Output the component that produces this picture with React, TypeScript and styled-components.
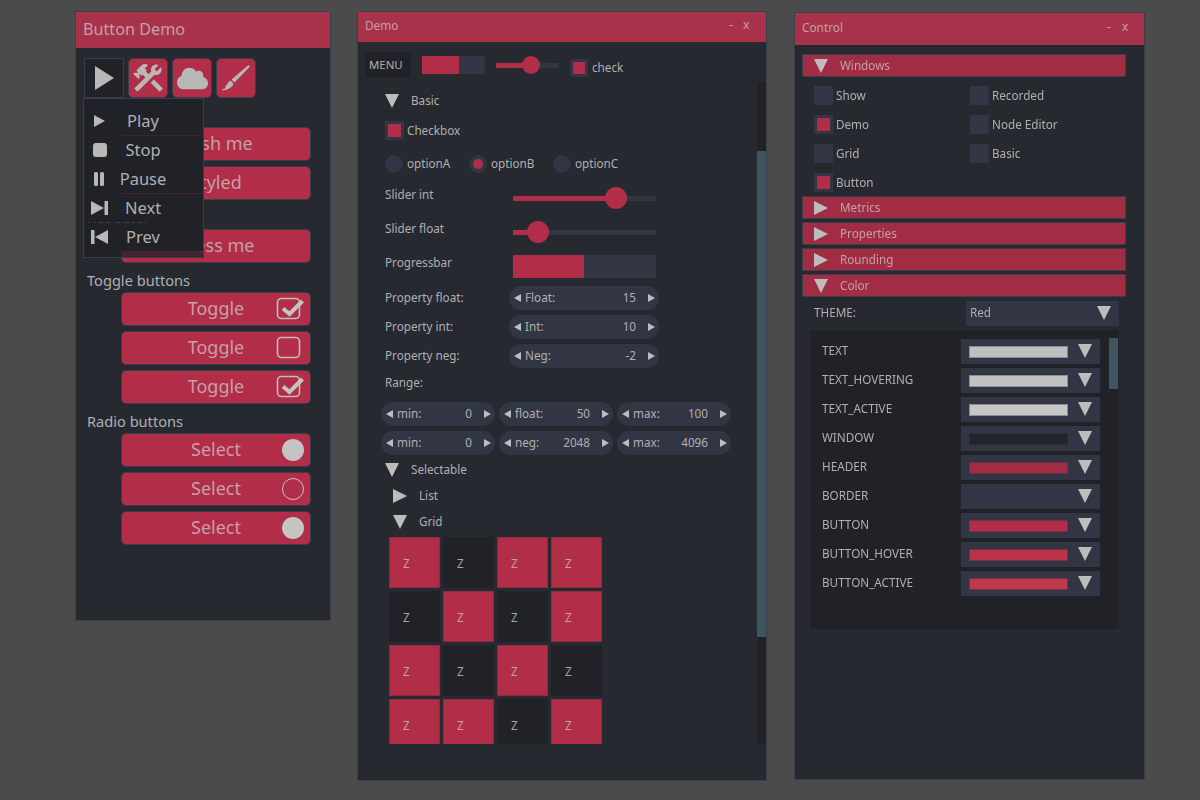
import React from 'react';
import styled, { createGlobalStyle } from 'styled-components';
import { MdConstruction } from 'react-icons/md';
import { FaCloud } from 'react-icons/fa';

const INK = '#b0b0b0';
const ON_RED = '#c4a0a8';
const RED = '#b22d47';
const SLOT = '#323644';
const EDGE = '#3a3e4a';
const DARK = '#202228';

const GlobalStyle = createGlobalStyle`
  html, body {
    margin: 0;
    height: 100%;
    background: #4b4b4b;
  }
  body {
    font-family: "Noto Sans", "Open Sans", sans-serif;
    color: ${INK};
  }
`;

const Desktop = styled.div`
  position: relative;
  width: 1200px;
  height: 800px;
  overflow: hidden;
  filter: blur(0.5px);
`;

const Win = styled.section<{ $x: number; $y: number; $w: number; $h: number }>`
  position: absolute;
  left: ${(p) => p.$x}px;
  top: ${(p) => p.$y}px;
  width: ${(p) => p.$w}px;
  height: ${(p) => p.$h}px;
  box-sizing: border-box;
  border: 1px solid ${EDGE};
  background: #262930;
`;

const Header = styled.header<{ $h: number; $big?: boolean }>`
  height: ${(p) => p.$h}px;
  box-sizing: border-box;
  display: flex;
  align-items: center;
  padding: 0 0 ${(p) => (p.$big ? 3 : 5)}px 7px;
  background: #a8324a;
  color: ${ON_RED};
  font-size: ${(p) => (p.$big ? 16.2 : 11.8)}px;
`;

const Title = styled.span`
  flex: 1;
`;

const HeaderBtn = styled.span<{ $w: number }>`
  width: ${(p) => p.$w}px;
  font-size: 12px;
`;

/* shared bits */

const Tri = ({ dir, size = 14 }: { dir: 'down' | 'right'; size?: number }) => (
  <TriSvg viewBox="0 0 14 14" width={size} height={size}>
    <polygon points={dir === 'down' ? '0,0 14,0 7,14' : '0,0 14,7 0,14'} fill="#bdbdbd" />
  </TriSvg>
);

const TriSvg = styled.svg`
  flex: none;
`;

const CheckBox = styled.span<{ $on?: boolean; $size?: number }>`
  flex: none;
  width: ${(p) => p.$size ?? 19}px;
  height: ${(p) => p.$size ?? 19}px;
  box-sizing: border-box;
  padding: 3px;
  background: ${SLOT};

  &::after {
    content: '';
    display: ${(p) => (p.$on ? 'block' : 'none')};
    width: 100%;
    height: 100%;
    background: ${RED};
  }
`;

const Label = styled.span<{ $w?: number; $top?: boolean }>`
  font-size: 11.7px;
  line-height: 14px;
  padding-bottom: ${(p) => (p.$top ? 0 : 2)}px;
  white-space: nowrap;
  flex: none;
  width: ${(p) => (p.$w ? `${p.$w}px` : 'auto')};
  align-self: ${(p) => (p.$top ? 'flex-start' : 'center')};
`;

/* button demo window */

const ButtonBody = styled.div`
  padding: 10px 0 0 8px;
`;

const IconRow = styled.div`
  display: flex;
  gap: 4px;
  height: 40px;
  margin-bottom: 29px;
`;

const IconBtn = styled.div<{ $dark?: boolean }>`
  width: 40px;
  height: 40px;
  box-sizing: border-box;
  display: flex;
  align-items: center;
  justify-content: center;
  border: 1px solid ${EDGE};
  border-radius: ${(p) => (p.$dark ? 2 : 5)}px;
  background: ${(p) => (p.$dark ? DARK : RED)};
  color: #b8b8b8;
`;

const SectionLabel = styled.div`
  height: 24px;
  line-height: 24px;
  margin-left: 3px;
  font-size: 14.6px;
`;

const BigBtn = styled.div`
  position: relative;
  width: 190px;
  height: 34px;
  box-sizing: border-box;
  margin: 0 0 5px 37px;
  padding-bottom: 2px;
  display: grid;
  align-items: center;
  justify-items: center;
  border: 1px solid ${EDGE};
  border-radius: 5px;
  background: ${RED};
  color: ${ON_RED};
  font-size: 18px;
`;

const BtnMark = styled.svg`
  position: absolute;
  right: 6px;
  top: 3px;
`;

const CheckMark = ({ on }: { on: boolean }) => (
  <BtnMark width="28" height="26" viewBox="0 0 28 26">
    <rect x="1.5" y="2.5" width="22" height="20" rx="4" fill="none" stroke="#bdbdbd" strokeWidth="1.6" />
    {on && <path d="M7 12.5 L13.5 18 L26.5 5" fill="none" stroke="#c4c4c4" strokeWidth="4" />}
  </BtnMark>
);

const RadioMark = ({ on }: { on: boolean }) => (
  <BtnMark width="28" height="26" viewBox="0 0 28 26">
    <circle cx="17" cy="13" r={on ? 11 : 10.5} fill={on ? '#c4c4c4' : 'none'} stroke="#c4c4c4" strokeWidth={on ? 0 : 1} />
  </BtnMark>
);

const Menu = styled.div`
  position: absolute;
  left: 7px;
  top: 86px;
  width: 121px;
  height: 160px;
  box-sizing: border-box;
  padding-top: 8px;
  display: flex;
  flex-direction: column;
  gap: 1px;
  border: 1px solid ${EDGE};
  background: rgba(31, 33, 40, 0.76);
`;

const MenuItem = styled.div`
  height: 28px;
  flex: none;
  display: grid;
  align-items: center;
  background: ${DARK};
  font-size: 16.5px;
  padding-left: 7px;

  & > * {
    grid-area: 1 / 1;
  }
`;

const MenuText = styled.span`
  justify-self: center;
  transform: translate(-4px, -1px);
`;

const menuIcons: Record<string, React.ReactNode> = {
  play: <polygon points="3,3 14,9 3,15" />,
  stop: <rect x="2" y="2" width="14" height="14" rx="3" />,
  pause: (
    <>
      <rect x="3" y="2" width="4" height="14" rx="1.5" />
      <rect x="9" y="2" width="4" height="14" rx="1.5" />
    </>
  ),
  next: (
    <>
      <polygon points="0,2 13,9 0,16" />
      <rect x="13.5" y="2" width="3.5" height="14" />
    </>
  ),
  prev: (
    <>
      <rect x="0" y="2" width="3.5" height="14" />
      <polygon points="17,2 4,9 17,16" />
    </>
  ),
};

const menuItems = [
  { icon: 'play', text: 'Play' },
  { icon: 'stop', text: 'Stop' },
  { icon: 'pause', text: 'Pause' },
  { icon: 'next', text: 'Next' },
  { icon: 'prev', text: 'Prev' },
];

/* demo window */

const MenuBar = styled.div`
  display: flex;
  align-items: center;
  gap: 11px;
  height: 26px;
  padding: 10px 0 4px 7px;
`;

const MenuBtn = styled.div`
  width: 46px;
  height: 26px;
  box-sizing: border-box;
  display: flex;
  align-items: center;
  padding: 0 0 1px 4px;
  background: ${DARK};
  font-size: 11.4px;
`;

const Bar = styled.div<{ $w: number; $h: number; $fill: number }>`
  flex: none;
  width: ${(p) => p.$w}px;
  height: ${(p) => p.$h}px;
  background: linear-gradient(
    to right,
    ${RED} ${(p) => p.$fill}%,
    ${SLOT} ${(p) => p.$fill}%
  );
`;

const SliderWrap = styled.div<{ $w: number; $track: number; $thumb: number; $pos: number }>`
  position: relative;
  flex: none;
  width: ${(p) => p.$w}px;
  height: ${(p) => p.$thumb}px;
  display: flex;
  align-items: center;

  &::before {
    content: '';
    width: 100%;
    height: ${(p) => p.$track}px;
    background: linear-gradient(
      to right,
      ${RED} ${(p) => p.$pos}px,
      ${SLOT} ${(p) => p.$pos}px
    );
  }

  &::after {
    content: '';
    position: absolute;
    top: 0;
    left: ${(p) => p.$pos - p.$thumb / 2}px;
    width: ${(p) => p.$thumb}px;
    height: ${(p) => p.$thumb}px;
    border-radius: 50%;
    background: ${RED};
  }
`;

const InlineCheck = styled.div`
  display: flex;
  align-items: center;
  gap: 4px;
  margin-top: 6px;
`;

const ScrollPane = styled.div`
  display: flex;
  height: 662px;
`;

const ScrollContent = styled.div`
  flex: 1;
  min-width: 0;
  overflow: hidden;
  padding-left: 27px;
`;

const ScrollBar = styled.div<{ $h: number; $start: number; $len: number; $track: string }>`
  flex: none;
  width: 9px;
  height: ${(p) => p.$h}px;
  background: linear-gradient(
    to bottom,
    ${(p) => p.$track} ${(p) => p.$start}px,
    #3e5560 ${(p) => p.$start}px,
    #3e5560 ${(p) => p.$start + p.$len}px,
    ${(p) => p.$track} ${(p) => p.$start + p.$len}px
  );
`;

const Row = styled.div<{ $h: number; $mt: number; $indent?: number; $gap?: number }>`
  display: flex;
  align-items: center;
  height: ${(p) => p.$h}px;
  margin-top: ${(p) => p.$mt}px;
  margin-left: ${(p) => p.$indent ?? 0}px;
  gap: ${(p) => p.$gap ?? 0}px;
`;

const TreeLabel = styled(Label)`
  margin-left: 12px;
`;

const Radio = styled.span<{ $on?: boolean }>`
  flex: none;
  width: 18px;
  height: 18px;
  display: flex;
  align-items: center;
  justify-content: center;
  border-radius: 50%;
  background: ${SLOT};

  &::after {
    content: '';
    display: ${(p) => (p.$on ? 'block' : 'none')};
    width: 10px;
    height: 10px;
    border-radius: 50%;
    background: ${RED};
  }
`;

const RadioItem = styled.div`
  width: 84px;
  display: flex;
  align-items: center;
  gap: 4px;
`;

const PillBox = styled.div<{ $w: number }>`
  flex: none;
  width: ${(p) => p.$w}px;
  height: 24px;
  box-sizing: border-box;
  padding: 0 4px 0 5px;
  display: flex;
  align-items: center;
  border-radius: 12px;
  background: ${SLOT};
  font-size: 11.7px;
`;

const PillName = styled.span`
  flex: 1;
  margin: 0 0 2px 4px;
`;

const PillValue = styled.span`
  margin: 0 12px 2px 0;
`;

const Arrow = ({ left }: { left?: boolean }) => (
  <svg width="7" height="8" viewBox="0 0 7 8">
    <polygon points={left ? '7,0 0,4 7,8' : '0,0 7,4 0,8'} fill="#bdbdbd" />
  </svg>
);

const Pill = ({ w, name, value }: { w: number; name: string; value: number }) => (
  <PillBox $w={w}>
    <Arrow left />
    <PillName>{name}</PillName>
    <PillValue>{value}</PillValue>
    <Arrow />
  </PillBox>
);

const Grid = styled.div`
  display: grid;
  grid-template-columns: repeat(4, 51px);
  grid-auto-rows: 51px;
  gap: 3px;
  margin: 5px 0 0 4px;
`;

const Cell = styled.div<{ $on: boolean }>`
  box-sizing: border-box;
  display: flex;
  align-items: center;
  padding-left: 13px;
  border: 1px solid ${(p) => (p.$on ? '#8f2a40' : DARK)};
  background: ${(p) => (p.$on ? RED : DARK)};
  color: ${(p) => (p.$on ? ON_RED : '#a4a4a4')};
  font-size: 11.7px;
`;

const gridCells = [1, 0, 1, 1, 0, 1, 0, 1, 1, 0, 1, 0, 1, 1, 0, 1];

/* control window */

const ControlBody = styled.div`
  padding: 9px 0 0 7px;
`;

const Section = styled.div<{ $mt: number }>`
  width: 324px;
  height: 23px;
  box-sizing: border-box;
  margin-top: ${(p) => p.$mt}px;
  padding-left: 11px;
  display: flex;
  align-items: center;
  border: 1px solid ${EDGE};
  background: #a02d44;
  color: ${ON_RED};
`;

const SectionName = styled.span`
  margin: 0 0 2px 12px;
  font-size: 11.7px;
`;

const CheckGrid = styled.div`
  display: grid;
  grid-template-columns: 156px 156px;
  grid-auto-rows: 19px;
  row-gap: 10px;
  margin: 9px 0 0 12px;
`;

const CheckItem = styled.div`
  display: flex;
  align-items: center;
  gap: 3px;
`;

const ThemeRow = styled.div`
  display: flex;
  align-items: center;
  height: 25px;
  margin: 4px 0 0 12px;
`;

const Select = styled.div<{ $w: number }>`
  flex: none;
  width: ${(p) => p.$w}px;
  height: 25px;
  box-sizing: border-box;
  display: flex;
  align-items: center;
  justify-content: space-between;
  padding: 0 8px;
  background: ${SLOT};
  font-size: 11.7px;
`;

const ThemeName = styled.span`
  margin: -4px 0 0 -4px;
`;

const SelectTri = styled.span`
  display: flex;
  margin-top: -2px;
`;

const Swatch = styled.span<{ $c: string; $edge?: string }>`
  width: 97px;
  height: 10px;
  box-sizing: content-box;
  border: 1px solid ${(p) => p.$edge ?? SLOT};
  background: ${(p) => p.$c};
`;

const Group = styled.div`
  display: flex;
  justify-content: space-between;
  width: 309px;
  height: 299px;
  margin: 4px 0 0 8px;
  padding-top: 8px;
  box-sizing: border-box;
  background: ${DARK};
`;

const ColorList = styled.div`
  padding: 1px 0 0 12px;
  display: flex;
  flex-direction: column;
  gap: 4px;
`;

const ColorRow = styled.div`
  display: flex;
  align-items: center;
  height: 25px;
`;

const ColorName = styled(Label)`
  padding-bottom: 4px;
`;

const GroupScroll = styled(ScrollBar)`
  margin-right: 1px;
`;

const colors = [
  { name: 'TEXT', c: '#bebebe', edge: '#8e8e8e' },
  { name: 'TEXT_HOVERING', c: '#c2c2c2', edge: '#8e8e8e' },
  { name: 'TEXT_ACTIVE', c: '#c6c6c6', edge: '#8e8e8e' },
  { name: 'WINDOW', c: '#22242b', edge: '#2a2d36' },
  { name: 'HEADER', c: '#a02d44', edge: '#6f3045' },
  { name: 'BORDER', c: SLOT, edge: SLOT },
  { name: 'BUTTON', c: RED, edge: '#7a2e42' },
  { name: 'BUTTON_HOVER', c: '#b93349', edge: '#7a2e42' },
  { name: 'BUTTON_ACTIVE', c: '#c0384d', edge: '#7a2e42' },
];

const toggles = [true, false, true];
const radios = [true, false, true];

const App: React.FC = () => {
  return (
    <Desktop>
      <GlobalStyle />

      <Win $x={75} $y={11} $w={256} $h={610}>
        <Header $h={36} $big>
          <Title>Button Demo</Title>
        </Header>
        <ButtonBody>
          <IconRow>
            <IconBtn $dark>
              <svg width="24" height="26" viewBox="0 0 24 26">
                <polygon points="3,1 22,13 3,25" fill="#b8b8b8" />
              </svg>
            </IconBtn>
            <IconBtn>
              <MdConstruction size={36} />
            </IconBtn>
            <IconBtn>
              <FaCloud size={31} />
            </IconBtn>
            <IconBtn>
              <svg width="32" height="32" viewBox="0 0 32 32">
                <path
                  d="M28.5 3 L30 4.5 L14.5 20.5 L11.5 17.5 Z M10.5 18.5 L13.5 21.5 C12.5 25 9 27.5 3 28.5 L2 27.5 L6 26 L5 25 C7 23 8 20 10.5 18.5 Z"
                  fill="#b8b8b8"
                />
              </svg>
            </IconBtn>
          </IconRow>
          <BigBtn>Push me</BigBtn>
          <BigBtn>Styled</BigBtn>
          <SectionLabel>Repeater</SectionLabel>
          <BigBtn>Press me</BigBtn>
          <SectionLabel>Toggle buttons</SectionLabel>
          {toggles.map((on, i) => (
            <BigBtn key={i}>
              Toggle
              <CheckMark on={on} />
            </BigBtn>
          ))}
          <SectionLabel>Radio buttons</SectionLabel>
          {radios.map((on, i) => (
            <BigBtn key={i}>
              Select
              <RadioMark on={on} />
            </BigBtn>
          ))}
        </ButtonBody>
        <Menu>
          {menuItems.map((item) => (
            <MenuItem key={item.text}>
              <svg width="18" height="18" viewBox="0 0 18 18" fill="#b8b8b8">
                {menuIcons[item.icon]}
              </svg>
              <MenuText>{item.text}</MenuText>
            </MenuItem>
          ))}
        </Menu>
      </Win>

      <Win $x={357} $y={11} $w={410} $h={770}>
        <Header $h={30}>
          <Title>Demo</Title>
          <HeaderBtn $w={14}>-</HeaderBtn>
          <HeaderBtn $w={23}>x</HeaderBtn>
        </Header>
        <MenuBar>
          <MenuBtn>MENU</MenuBtn>
          <Bar $w={63} $h={18} $fill={58} />
          <SliderWrap $w={63} $track={5} $thumb={18} $pos={35} />
          <InlineCheck>
            <CheckBox $on $size={18} />
            <Label>check</Label>
          </InlineCheck>
        </MenuBar>
        <ScrollPane>
          <ScrollContent>
            <Row $h={20} $mt={9}>
              <Tri dir="down" />
              <TreeLabel>Basic</TreeLabel>
            </Row>
            <Row $h={19} $mt={10} $gap={3}>
              <CheckBox $on />
              <Label>Checkbox</Label>
            </Row>
            <Row $h={18} $mt={15}>
              <RadioItem>
                <Radio />
                <Label>optionA</Label>
              </RadioItem>
              <RadioItem>
                <Radio $on />
                <Label>optionB</Label>
              </RadioItem>
              <RadioItem>
                <Radio />
                <Label>optionC</Label>
              </RadioItem>
            </Row>
            <Row $h={22} $mt={14}>
              <Label $w={128} $top>Slider int</Label>
              <SliderWrap $w={143} $track={5} $thumb={22} $pos={103} />
            </Row>
            <Row $h={22} $mt={12}>
              <Label $w={128} $top>Slider float</Label>
              <SliderWrap $w={143} $track={5} $thumb={22} $pos={25} />
            </Row>
            <Row $h={23} $mt={12}>
              <Label $w={128} $top>Progressbar</Label>
              <Bar $w={143} $h={23} $fill={49.5} />
            </Row>
            <Row $h={24} $mt={8}>
              <Label $w={124}>Property float:</Label>
              <Pill w={150} name="Float:" value={15} />
            </Row>
            <Row $h={24} $mt={5}>
              <Label $w={124}>Property int:</Label>
              <Pill w={150} name="Int:" value={10} />
            </Row>
            <Row $h={24} $mt={5}>
              <Label $w={124}>Property neg:</Label>
              <Pill w={150} name="Neg:" value={-2} />
            </Row>
            <Row $h={14} $mt={8}>
              <Label>Range:</Label>
            </Row>
            <Row $h={24} $mt={12} $indent={-4} $gap={4}>
              <Pill w={114} name="min:" value={0} />
              <Pill w={114} name="float:" value={50} />
              <Pill w={114} name="max:" value={100} />
            </Row>
            <Row $h={24} $mt={5} $indent={-4} $gap={4}>
              <Pill w={114} name="min:" value={0} />
              <Pill w={114} name="neg:" value={2048} />
              <Pill w={114} name="max:" value={4096} />
            </Row>
            <Row $h={20} $mt={5}>
              <Tri dir="down" />
              <TreeLabel>Selectable</TreeLabel>
            </Row>
            <Row $h={20} $mt={6} $indent={8}>
              <Tri dir="right" />
              <TreeLabel>List</TreeLabel>
            </Row>
            <Row $h={20} $mt={6} $indent={8}>
              <Tri dir="down" />
              <TreeLabel>Grid</TreeLabel>
            </Row>
            <Grid>
              {gridCells.map((on, i) => (
                <Cell key={i} $on={on === 1}>Z</Cell>
              ))}
            </Grid>
          </ScrollContent>
          <ScrollBar $h={662} $start={69} $len={486} $track={DARK} />
        </ScrollPane>
      </Win>

      <Win $x={794} $y={12} $w={351} $h={768}>
        <Header $h={32}>
          <Title>Control</Title>
          <HeaderBtn $w={15}>-</HeaderBtn>
          <HeaderBtn $w={22}>x</HeaderBtn>
        </Header>
        <ControlBody>
          <Section $mt={0}>
            <Tri dir="down" />
            <SectionName>Windows</SectionName>
          </Section>
          <CheckGrid>
            <CheckItem><CheckBox /><Label>Show</Label></CheckItem>
            <CheckItem><CheckBox /><Label>Recorded</Label></CheckItem>
            <CheckItem><CheckBox $on /><Label>Demo</Label></CheckItem>
            <CheckItem><CheckBox /><Label>Node Editor</Label></CheckItem>
            <CheckItem><CheckBox /><Label>Grid</Label></CheckItem>
            <CheckItem><CheckBox /><Label>Basic</Label></CheckItem>
            <CheckItem><CheckBox $on /><Label>Button</Label></CheckItem>
          </CheckGrid>
          <Section $mt={4}>
            <Tri dir="right" />
            <SectionName>Metrics</SectionName>
          </Section>
          <Section $mt={3}>
            <Tri dir="right" />
            <SectionName>Properties</SectionName>
          </Section>
          <Section $mt={3}>
            <Tri dir="right" />
            <SectionName>Rounding</SectionName>
          </Section>
          <Section $mt={3}>
            <Tri dir="down" />
            <SectionName>Color</SectionName>
          </Section>
          <ThemeRow>
            <ColorName $w={152}>THEME:</ColorName>
            <Select $w={153}>
              <ThemeName>Red</ThemeName>
              <SelectTri><Tri dir="down" /></SelectTri>
            </Select>
          </ThemeRow>
          <Group>
            <ColorList>
              {colors.map((item) => (
                <ColorRow key={item.name}>
                  <ColorName $w={139}>{item.name}</ColorName>
                  <Select $w={139}>
                    <Swatch $c={item.c} $edge={item.edge} />
                    <SelectTri><Tri dir="down" /></SelectTri>
                  </Select>
                </ColorRow>
              ))}
            </ColorList>
            <GroupScroll $h={280} $start={0} $len={51} $track={DARK} />
          </Group>
        </ControlBody>
      </Win>
    </Desktop>
  );
};

export default App;
